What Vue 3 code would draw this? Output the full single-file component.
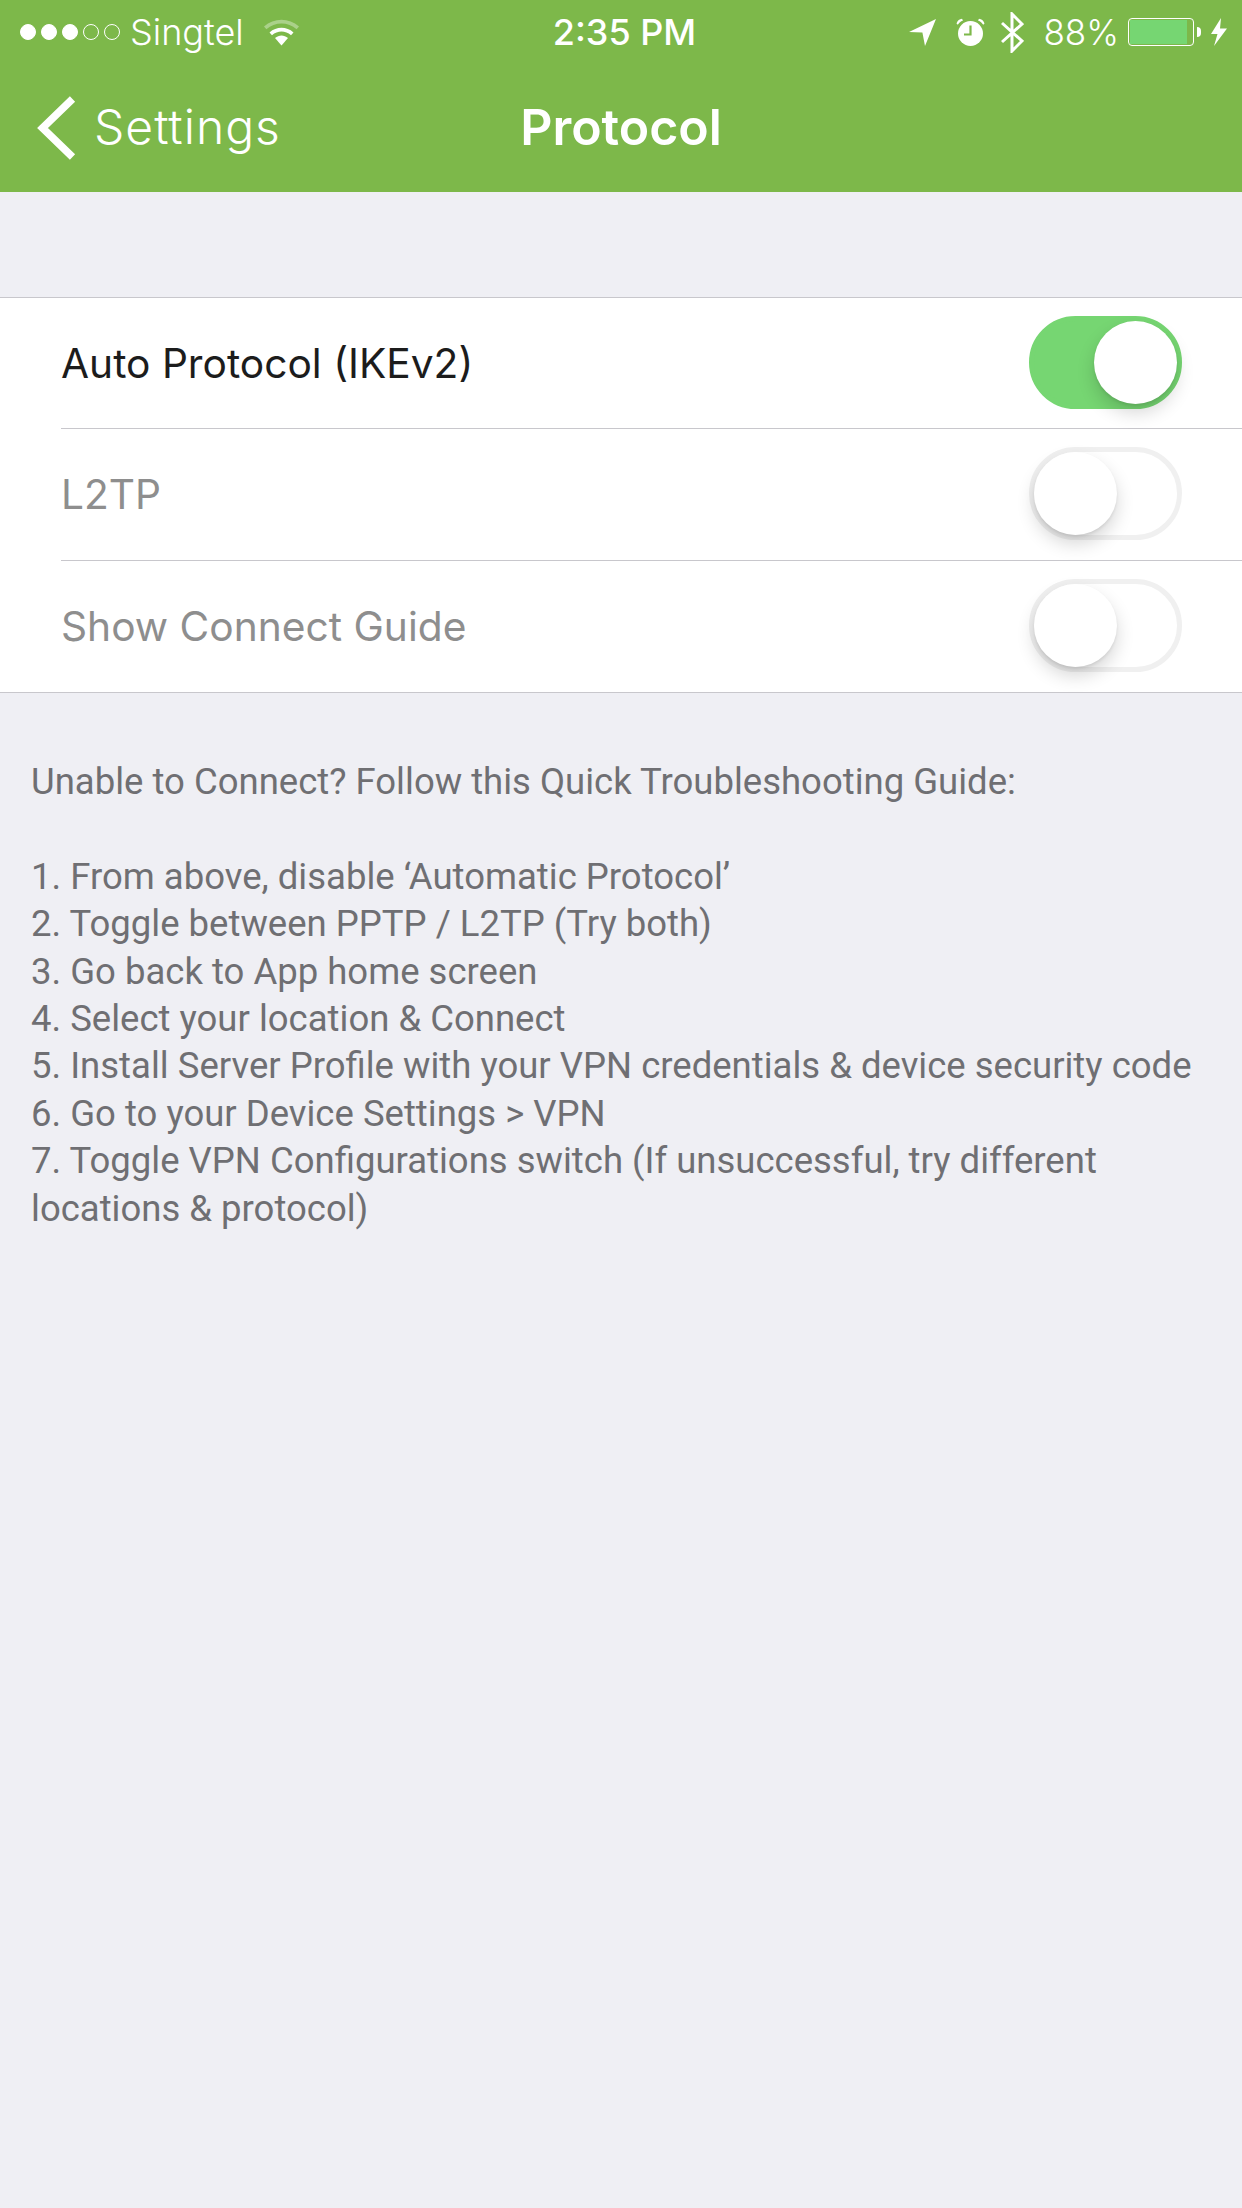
<script setup>
const rows = [
  { label: 'Auto Protocol (IKEv2)', on: true },
  { label: 'L2TP', on: false },
  { label: 'Show Connect Guide', on: false }
]

const steps = [
  '1. From above, disable ‘Automatic Protocol’',
  '2. Toggle between PPTP / L2TP (Try both)',
  '3. Go back to App home screen',
  '4. Select your location & Connect',
  '5. Install Server Profile with your VPN credentials & device security code',
  '6. Go to your Device Settings > VPN',
  '7. Toggle VPN Configurations switch (If unsuccessful, try different locations & protocol)'
]

// signal dots, 3 of 5 filled
const dots = [true, true, true, false, false]
</script>

<template>
  <div class="page">
    <header class="header">
      <div class="status">
        <div class="status-left">
          <div class="dots">
            <span v-for="(d, i) in dots" :key="i" class="dot" :class="{ full: d }"></span>
          </div>
          <span class="carrier">Singtel</span>
          <svg class="wifi" width="37" height="28" viewBox="0 0 37 28">
            <path d="M1 8.5C11 -0.5 26 -0.5 36 8.5L33.6 11.2C25 3.6 12 3.6 3.4 11.2Z" fill="#fff" opacity="0.35"/>
            <path d="M6.5 14.5C13.5 8.3 23.5 8.3 30.5 14.5L28 17.2C22.3 12.3 14.7 12.3 9 17.2Z" fill="#fff"/>
            <path d="M12 20C16 16.6 21 16.6 25 20L18.5 27.5Z" fill="#fff"/>
          </svg>
        </div>
        <div class="time">2:35 PM</div>
        <div class="status-right">
          <svg class="loc" width="27" height="27" viewBox="0 0 27 27">
            <path d="M27 0L16 27L13.4 13.6L0 13Z" fill="#fff"/>
          </svg>
          <svg class="alarm" width="29" height="28" viewBox="0 0 29 28">
            <circle cx="14.5" cy="15.5" r="12.5" fill="#fff"/>
            <path d="M0.5 5.5C1.5 2.5 3.5 1 6 0.8L7 2.4C4.5 3.2 3 4.6 1.8 6.8Z" fill="#fff"/>
            <path d="M28.5 5.5C27.5 2.5 25.5 1 23 0.8L22 2.4C24.5 3.2 26 4.6 27.2 6.8Z" fill="#fff"/>
            <path d="M14.5 7.5V16.5H8" fill="none" stroke="#7db84a" stroke-width="2.2"/>
          </svg>
          <svg class="bt" width="23" height="41" viewBox="0 0 23 41">
            <path d="M1 11L21 29L11 39V2L21 12L1 30" fill="none" stroke="#fff" stroke-width="3"/>
          </svg>
          <span class="percent">88%</span>
          <div class="battery"><div class="battery-fill"></div></div>
          <div class="battery-nub"></div>
          <svg class="bolt" width="16" height="28" viewBox="0 0 16 28">
            <path d="M10 0L0 16H6.5L3 28L16 10.5H9Z" fill="#fff"/>
          </svg>
        </div>
      </div>
      <nav class="nav">
        <div class="back">
          <svg width="40" height="64" viewBox="0 0 40 64">
            <path d="M36.5 3L6.5 32L36.5 61" fill="none" stroke="#fff" stroke-width="7.5"/>
          </svg>
          <span class="back-label">Settings</span>
        </div>
        <div class="title">Protocol</div>
        <div></div>
      </nav>
    </header>

    <section class="group">
      <div v-for="row in rows" :key="row.label" class="row">
        <div class="row-inner">
          <span class="row-label" :class="{ off: !row.on }">{{ row.label }}</span>
          <div class="switch" :class="{ on: row.on }"><div class="knob"></div></div>
        </div>
      </div>
    </section>

    <section class="guide">
      <p class="guide-head">Unable to Connect? Follow this Quick Troubleshooting Guide:</p>
      <p v-for="s in steps" :key="s">{{ s }}</p>
    </section>
  </div>
</template>

<style scoped>
.page {
  width: 1242px;
  height: 2208px;
  background: #efeff4;
  font-family: Inter, "Liberation Sans", sans-serif;
  overflow: hidden;
}

.header {
  height: 192px;
  background: #7db84a;
  color: #fff;
}

.status {
  height: 64px;
  display: grid;
  grid-template-columns: 1fr auto 1fr;
  align-items: center;
}

.status-left {
  display: flex;
  align-items: center;
  padding-left: 20px;
}

.dots {
  display: flex;
  gap: 5px;
}

.dot {
  width: 16px;
  height: 16px;
  box-sizing: border-box;
  border-radius: 50%;
  border: 1px solid #fff;
}

.dot.full {
  background: #fff;
}

.carrier {
  margin-left: 10px;
  font-size: 36px;
  font-weight: 300;
}

.wifi {
  margin-left: 19px;
}

.time {
  margin-left: 7px;
  font-size: 36px;
  font-weight: 500;
}

.status-right {
  display: flex;
  align-items: center;
  justify-content: flex-end;
  padding-right: 15px;
}

.alarm {
  margin-left: 20px;
}

.bt {
  margin-left: 16px;
}

.percent {
  margin-left: 19px;
  font-size: 35px;
  font-weight: 300;
}

.battery {
  margin-left: 9px;
  width: 66px;
  height: 28px;
  box-sizing: border-box;
  border: 1px solid #fff;
  border-radius: 4px;
  padding: 1px;
}

.battery-fill {
  width: 57px;
  height: 100%;
  background: #76d672;
}

.battery-nub {
  margin-left: 3px;
  width: 4px;
  height: 10px;
  background: #fff;
  border-radius: 0 5px 5px 0;
}

.bolt {
  margin-left: 10px;
}

.nav {
  height: 128px;
  display: grid;
  grid-template-columns: 1fr auto 1fr;
  align-items: center;
}

.back {
  display: flex;
  align-items: center;
  padding-left: 36px;
}

.back-label {
  margin-left: 18px;
  margin-bottom: 3px;
  font-size: 48px;
  font-weight: 300;
  letter-spacing: 1px;
}

.title {
  margin-bottom: 3px;
  font-size: 50px;
  font-weight: 600;
}

.group {
  margin-top: 105px;
  background: #fff;
  border-top: 1px solid #c8c7cc;
  border-bottom: 1px solid #c8c7cc;
}

.row {
  padding-left: 61px;
}

.row-inner {
  height: 131px;
  padding-right: 60px;
  display: flex;
  align-items: center;
  justify-content: space-between;
  border-bottom: 1px solid #c8c7cc;
}

.row:first-child .row-inner {
  height: 130px;
}

.row:last-child .row-inner {
  border-bottom: none;
}

.row-label {
  font-size: 40.7px;
  font-weight: 400;
  color: #1c1c1c;
}

.row-label.off {
  color: #8e8e8e;
}

.switch {
  width: 153px;
  height: 93px;
  margin-bottom: 2px;
  box-sizing: border-box;
  border: 5px solid #f0f0f0;
  border-radius: 47px;
  display: flex;
  align-items: center;
  background: #fff;
}

.switch.on {
  border-color: #76d672;
  background: #76d672;
  justify-content: flex-end;
}

.knob {
  width: 83px;
  height: 83px;
  border-radius: 50%;
  background: #fff;
  box-shadow: 0 9px 18px rgba(0, 0, 0, 0.16), 0 2px 3px rgba(0, 0, 0, 0.08);
}

.guide {
  padding: 65px 31px 0;
  font-family: Roboto, "Liberation Sans", sans-serif;
  font-size: 36.5px;
  line-height: 47.4px;
  color: #6f6f73;
}

.guide p {
  margin: 0;
}

.guide .guide-head {
  margin-bottom: 47.4px;
}
</style>

<style>
html, body {
  margin: 0;
  background: #efeff4;
}
</style>
